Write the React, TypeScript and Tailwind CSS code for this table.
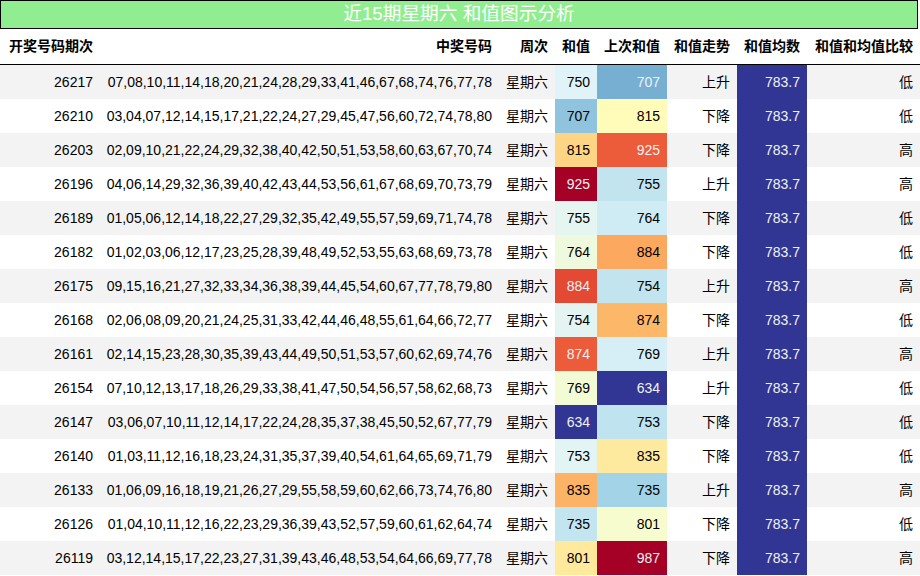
const FONT = "font-['Liberation_Sans','Noto_Sans_CJK_SC',sans-serif]";

type Row = {
  issue: string;
  numbers: string;
  sum: number;
  prev: number;
  trend: string;
  cmp: string;
};

const ROWS: Row[] = [
  { issue: "26217", numbers: "07,08,10,11,14,18,20,21,24,28,29,33,41,46,67,68,74,76,77,78", sum: 750, prev: 707, trend: "上升", cmp: "低" },
  { issue: "26210", numbers: "03,04,07,12,14,15,17,21,22,24,27,29,45,47,56,60,72,74,78,80", sum: 707, prev: 815, trend: "下降", cmp: "低" },
  { issue: "26203", numbers: "02,09,10,21,22,24,29,32,38,40,42,50,51,53,58,60,63,67,70,74", sum: 815, prev: 925, trend: "下降", cmp: "高" },
  { issue: "26196", numbers: "04,06,14,29,32,36,39,40,42,43,44,53,56,61,67,68,69,70,73,79", sum: 925, prev: 755, trend: "上升", cmp: "高" },
  { issue: "26189", numbers: "01,05,06,12,14,18,22,27,29,32,35,42,49,55,57,59,69,71,74,78", sum: 755, prev: 764, trend: "下降", cmp: "低" },
  { issue: "26182", numbers: "01,02,03,06,12,17,23,25,28,39,48,49,52,53,55,63,68,69,73,78", sum: 764, prev: 884, trend: "下降", cmp: "低" },
  { issue: "26175", numbers: "09,15,16,21,27,32,33,34,36,38,39,44,45,54,60,67,77,78,79,80", sum: 884, prev: 754, trend: "上升", cmp: "高" },
  { issue: "26168", numbers: "02,06,08,09,20,21,24,25,31,33,42,44,46,48,55,61,64,66,72,77", sum: 754, prev: 874, trend: "下降", cmp: "低" },
  { issue: "26161", numbers: "02,14,15,23,28,30,35,39,43,44,49,50,51,53,57,60,62,69,74,76", sum: 874, prev: 769, trend: "上升", cmp: "高" },
  { issue: "26154", numbers: "07,10,12,13,17,18,26,29,33,38,41,47,50,54,56,57,58,62,68,73", sum: 769, prev: 634, trend: "上升", cmp: "低" },
  { issue: "26147", numbers: "03,06,07,10,11,12,14,17,22,24,28,35,37,38,45,50,52,67,77,79", sum: 634, prev: 753, trend: "下降", cmp: "低" },
  { issue: "26140", numbers: "01,03,11,12,16,18,23,24,31,35,37,39,40,54,61,64,65,69,71,79", sum: 753, prev: 835, trend: "下降", cmp: "低" },
  { issue: "26133", numbers: "01,06,09,16,18,19,21,26,27,29,55,58,59,60,62,66,73,74,76,80", sum: 835, prev: 735, trend: "上升", cmp: "高" },
  { issue: "26126", numbers: "01,04,10,11,12,16,22,23,29,36,39,43,52,57,59,60,61,62,64,74", sum: 735, prev: 801, trend: "下降", cmp: "低" },
  { issue: "26119", numbers: "03,12,14,15,17,22,23,27,31,39,43,46,48,53,54,64,66,69,77,78", sum: 801, prev: 987, trend: "下降", cmp: "高" },
];

// RdYlBu reversed, 11 stops (low = blue, high = red)
const STOPS = [
  "#313695", "#4575b4", "#74add1", "#abd9e9", "#e0f3f8", "#ffffbf",
  "#fee090", "#fdae61", "#f46d43", "#d73027", "#a50026",
].map((h) => [1, 3, 5].map((i) => parseInt(h.slice(i, i + 2), 16)));

function heat(value: number, min: number, max: number) {
  const norm = max === min ? 0 : (value - min) / (max - min);
  const idx = Math.min(255, Math.max(0, Math.floor(norm * 256)));
  const t = (idx / 255) * (STOPS.length - 1);
  const i = Math.min(STOPS.length - 2, Math.floor(t));
  const f = t - i;
  const rgb = STOPS[i].map((c, k) => Math.round(c + (STOPS[i + 1][k] - c) * f));
  const lin = rgb.map((c) => {
    const s = c / 255;
    return s <= 0.03928 ? s / 12.92 : Math.pow((s + 0.055) / 1.055, 2.4);
  });
  const lum = 0.2126 * lin[0] + 0.7152 * lin[1] + 0.0722 * lin[2];
  return {
    backgroundColor: `rgb(${rgb[0]},${rgb[1]},${rgb[2]})`,
    color: lum < 0.408 ? "#f1f1f1" : "#000000",
  };
}

const GRID = "grid grid-cols-[100px_399px_56px_42px_70px_70px_70px_113px]";
const CELL = "flex items-center justify-end pr-[7px] whitespace-nowrap";

const HEADERS = ["开奖号码期次", "中奖号码", "周次", "和值", "上次和值", "和值走势", "和值均数", "和值和均值比较"];

export default function App() {
  const sums = ROWS.map((r) => r.sum);
  const prevs = ROWS.map((r) => r.prev);
  const sMin = Math.min(...sums), sMax = Math.max(...sums);
  const pMin = Math.min(...prevs), pMax = Math.max(...prevs);
  const mean = 783.7;

  return (
    <div className={`w-[920px] h-[576px] overflow-hidden bg-white text-[14px] text-black ${FONT}`}>
      <div className="w-[918px] h-[29px] border border-black bg-[#90ee90] flex items-center justify-center text-white text-[18.7px] leading-none">
        近15期星期六 和值图示分析
      </div>
      <div className={`${GRID} h-[36px] border-b border-black font-bold`}>
        {HEADERS.map((h) => (
          <div key={h} className={CELL}>
            {h}
          </div>
        ))}
      </div>
      {ROWS.map((r, i) => (
        <div key={r.issue} className={`${GRID} h-[34px] ${i % 2 === 0 ? "bg-[#f3f3f3]" : "bg-white"}`}>
          <div className={CELL}>{r.issue}</div>
          <div className={CELL}>{r.numbers}</div>
          <div className={CELL}>星期六</div>
          <div className={CELL} style={heat(r.sum, sMin, sMax)}>
            {r.sum}
          </div>
          <div className={CELL} style={heat(r.prev, pMin, pMax)}>
            {r.prev}
          </div>
          <div className={CELL}>{r.trend}</div>
          <div className={CELL} style={heat(mean, mean, mean)}>
            {mean}
          </div>
          <div className={CELL}>{r.cmp}</div>
        </div>
      ))}
    </div>
  );
}
